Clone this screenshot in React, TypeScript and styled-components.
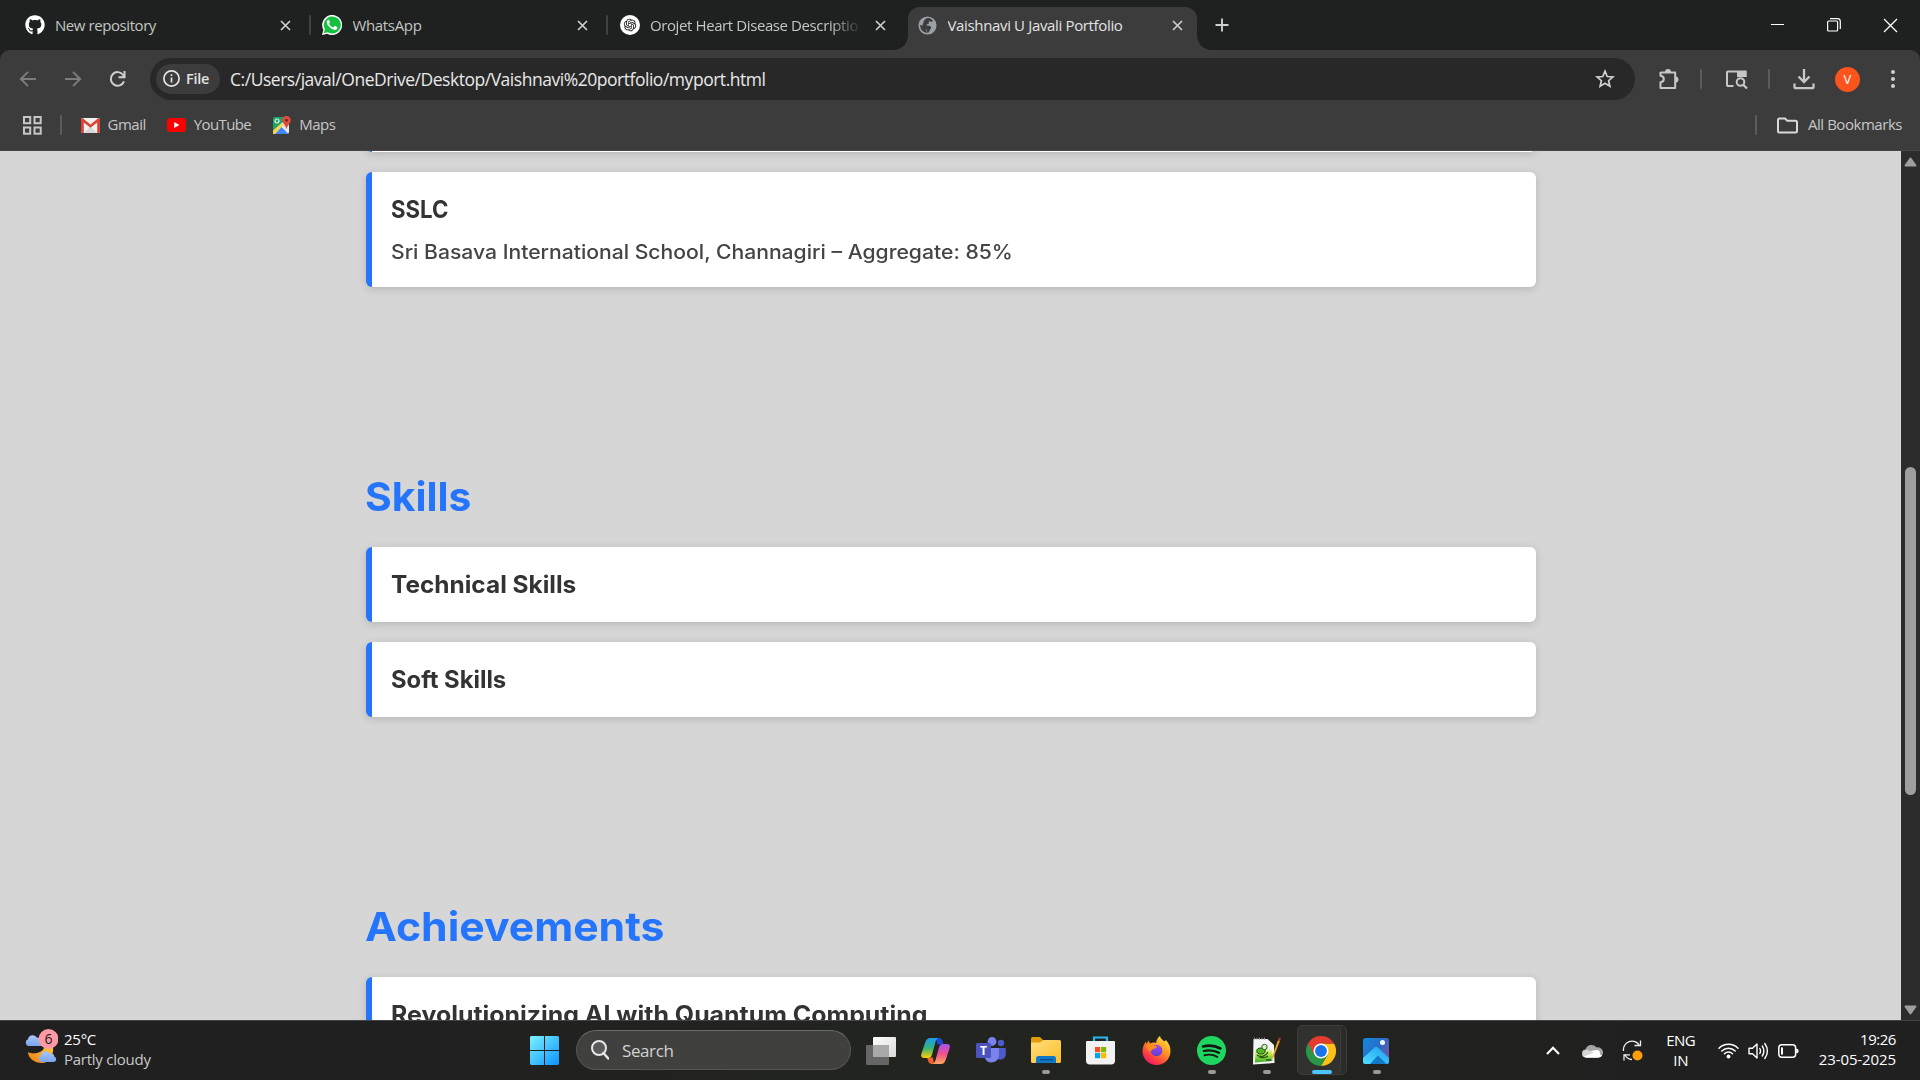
import React from "react";
import styled, { createGlobalStyle, css } from "styled-components";
import { FaGithub } from "react-icons/fa";
import { RiOpenaiFill } from "react-icons/ri";

const GlobalStyle = createGlobalStyle`
  * { box-sizing: border-box; }
  html, body { margin: 0; padding: 0; background: #202020; }
  body { overflow: hidden; }
  svg { display: block; flex: none; }
`;

const Screen = styled.div`
  width: 1920px;
  height: 1080px;
  display: flex;
  flex-direction: column;
  overflow: hidden;
  font-family: "Open Sans", "Noto Sans", sans-serif;
  font-size: 15px;
  white-space: nowrap;
`;

const Label = styled.span<{ $track?: number }>`
  letter-spacing: ${(p) => p.$track ?? -0.4}px;
`;

/* ---------- tab strip ---------- */

const TabStrip = styled.header`
  height: 50px;
  flex: none;
  display: flex;
  background: #1f2120;
  padding-left: 12px;
`;

const Tab = styled.div<{ $active?: boolean; $divider?: boolean }>`
  position: relative;
  width: 297.5px;
  height: 50px;
  display: flex;
  align-items: center;
  padding-left: 12.5px;
  color: #c3c6c4;
  ${(p) =>
    p.$divider &&
    css`
      &::after {
        content: "";
        position: absolute;
        right: -1px;
        top: 15px;
        width: 2px;
        height: 20px;
        border-radius: 1px;
        background: #414342;
      }
    `}
  ${(p) =>
    p.$active &&
    css`
      color: #e3e3e3;
      width: 293px;
      &::before {
        content: "";
        position: absolute;
        left: 3.5px;
        top: 7px;
        width: 289px;
        height: 43px;
        border-radius: 12px 12px 0 0;
        background: #3c3c3c;
      }
    `}
`;

const Flare = styled.i<{ $side: "left" | "right" }>`
  position: absolute;
  bottom: 0;
  width: 14px;
  height: 14px;
  ${(p) => (p.$side === "left" ? "left: -10.5px;" : "left: 292.5px;")}
  background: radial-gradient(
    circle at ${(p) => (p.$side === "left" ? "0 0" : "100% 0")},
    transparent 13.5px,
    #3c3c3c 14px
  );
`;

const TabIcon = styled.span`
  position: relative;
  width: 20px;
  height: 20px;
  display: grid;
  place-items: center;
  margin-right: 10.5px;
`;

const TabTitle = styled.div<{ $fade?: boolean; $track?: number }>`
  position: relative;
  width: 209px;
  overflow: hidden;
  letter-spacing: ${(p) => p.$track ?? -0.4}px;
  ${(p) => p.$fade && "mask-image: linear-gradient(90deg, #000 180px, transparent 212px);"}
`;

const TabClose = styled.span`
  position: relative;
  margin-left: 16.5px;
`;

const NewTab = styled.span`
  display: flex;
  align-items: center;
  margin-left: 17.5px;
`;

const WindowControls = styled.div`
  display: flex;
  align-items: center;
  gap: 43px;
  margin-left: auto;
  padding-right: 23px;
`;

/* ---------- toolbar ---------- */

const Chrome = styled.div`
  height: 101px;
  flex: none;
  background: linear-gradient(#1f2120, #1f2120) 0 0 / 100% 12px no-repeat;
`;

const ChromeBody = styled.div`
  height: 101px;
  background: #3c3c3c;
  border-radius: 10px 10px 0 0;
  border-bottom: 1px solid #4a4647;
`;

const Toolbar = styled.div`
  height: 58px;
  display: flex;
  align-items: center;
  padding: 0 22px 0 18px;
`;

const NavButtons = styled.div`
  display: flex;
  align-items: center;
  width: 132px;
  gap: 25px;
`;

const Omnibox = styled.div`
  width: 1485px;
  height: 42px;
  border-radius: 21px;
  background: #282828;
  display: flex;
  align-items: center;
  padding: 0 20px 0 6px;
`;

const FileChip = styled.div`
  width: 64px;
  height: 30px;
  border-radius: 15px;
  background: #3c3c3c;
  color: #e3e3e3;
  font-weight: 600;
  font-size: 14.5px;
  display: flex;
  align-items: center;
  gap: 6px;
  padding: 0 0 1px 7px;
`;

const Url = styled.div`
  flex: 1;
  padding-left: 10px;
  font-size: 17.5px;
  letter-spacing: -0.47px;
  color: #e8e8e8;
`;

const ToolbarIcon = styled.span<{ $before: number }>`
  flex: none;
  margin-left: ${(p) => p.$before}px;
`;

const Divider = styled.i`
  display: block;
  width: 2px;
  height: 20px;
  border-radius: 1px;
  background: #5c5c5c;
`;

const Avatar = styled.span`
  width: 25px;
  height: 25px;
  border-radius: 50%;
  background: #fa541c;
  color: #fff;
  font-size: 13px;
  display: grid;
  place-items: center;
`;

const BookmarksBar = styled.div`
  height: 34px;
  display: flex;
  align-items: center;
  padding: 0 18px 0 22.5px;
  color: #c7c7c7;
`;

const Bookmark = styled.div<{ $gap: number; $before: number }>`
  display: flex;
  align-items: center;
  gap: ${(p) => p.$gap}px;
  margin-left: ${(p) => p.$before}px;
`;

const AllBookmarks = styled(Bookmark)`
  margin-left: auto;
`;

const BookmarkName = styled(Label)`
  padding-bottom: 2px;
`;

/* ---------- web page ---------- */

const Viewport = styled.div`
  flex: 1;
  min-height: 0;
  display: flex;
  overflow: hidden;
  background: #d6d6d6;
`;

const Page = styled.main`
  width: 1901px;
  height: 869px;
  overflow: hidden;
  display: flex;
  flex-direction: column;
  align-items: center;
  font-family: Inter, "Open Sans", sans-serif;
`;

const Section = styled.section`
  width: 1170px;
  flex: none;
  margin: 0 0 180px 1px;
  display: flex;
  flex-direction: column;
  gap: 20px;
`;

const EducationSection = styled(Section)`
  margin-top: -39px;
`;

const stretched = css<{ $stretch: number }>`
  align-self: flex-start;
  transform: scaleX(${(p) => p.$stretch});
  transform-origin: 0 50%;
`;

const SectionTitle = styled.h2<{ $stretch: number }>`
  margin: 0 0 0 -1px;
  line-height: 60px;
  font-size: 40px;
  font-weight: 700;
  color: #2575fc;
  ${stretched}
`;

const Card = styled.article`
  background: #fff;
  border-left: 6px solid #2575fc;
  border-radius: 6px;
  padding: 20px 20px 20px 19px;
  box-shadow: 0 2px 8px rgba(0, 0, 0, 0.15);
  display: flex;
  flex-direction: column;
  gap: 10px;
`;

const CardEnd = styled(Card)`
  height: 40px;
`;

const CardTitle = styled.h3<{ $stretch: number }>`
  margin: 0;
  line-height: 36px;
  height: 35px;
  font-size: 24px;
  font-weight: 700;
  color: #333;
  ${stretched}
`;

const CardText = styled.p<{ $stretch: number }>`
  margin: 0;
  line-height: 30px;
  font-size: 20px;
  font-weight: 500;
  color: #444;
  ${stretched}
`;

const Scrollbar = styled.div`
  width: 19px;
  height: 869px;
  background: #2c2c2c;
  display: flex;
  flex-direction: column;
  align-items: center;
  padding-top: 6px;
`;

const Thumb = styled.div`
  width: 11px;
  height: 328px;
  margin: 300px 0 210px;
  border-radius: 6px;
  background: #9f9f9f;
`;

/* ---------- taskbar ---------- */

const Taskbar = styled.footer`
  height: 60px;
  flex: none;
  display: flex;
  background: linear-gradient(90deg, #202020 0, #202020 400px, #22241f 850px, #22231f 1350px, #202020 1650px);
  border-top: 1px solid #444;
  color: #fff;
`;

const Weather = styled.div`
  width: 530px;
  display: flex;
  padding: 8px 0 0 24px;
  gap: 6px;
`;

const WeatherText = styled.div`
  display: flex;
  flex-direction: column;
  line-height: 20px;
`;

const Dim = styled(Label)`
  color: #c8c8c8;
`;

const Launcher = styled.div`
  display: flex;
  align-items: center;
`;

const SearchPill = styled.div`
  width: 275px;
  height: 40px;
  margin: 0 2px 1px 17px;
  border-radius: 20px;
  border: 1px solid #555;
  border-top-color: #6a6a6a;
  background: #40403f;
  display: flex;
  align-items: center;
  gap: 13px;
  padding-left: 14px;
  font-size: 17px;
  color: #d2d2d2;
`;

const AppSlot = styled.div<{ $mark?: "idle" | "active" }>`
  position: relative;
  width: 55.1px;
  height: 59px;
  display: grid;
  place-items: center;
  ${(p) =>
    p.$mark &&
    css`
      &::after {
        content: "";
        position: absolute;
        bottom: 6px;
        left: ${p.$mark === "active" ? 18 : 24}px;
        width: ${p.$mark === "active" ? 20 : 8}px;
        height: 4px;
        border-radius: 2px;
        background: ${p.$mark === "active" ? "#4cc2ff" : "#9a9a98"};
      }
    `}
`;

const ActivePlate = styled.i<{ $back?: boolean }>`
  position: absolute;
  top: 4px;
  left: 3px;
  width: ${(p) => (p.$back ? 50 : 44)}px;
  height: 50px;
  border-radius: 6px;
  background: ${(p) => (p.$back ? "#2b2b29" : "#31312f")};
  border: 1px solid #3c3c3a;
`;

const Above = styled.span`
  position: relative;
`;

const Tray = styled.div`
  flex: 1;
  display: flex;
  align-items: center;
  justify-content: flex-end;
  padding-right: 24px;
`;

const TrayItem = styled.div<{ $after: number }>`
  margin-right: ${(p) => p.$after}px;
`;

const Stack = styled.div<{ $align: string; $lift: number }>`
  display: flex;
  flex-direction: column;
  line-height: 20px;
  padding-bottom: ${(p) => p.$lift}px;
  align-items: ${(p) => p.$align};
`;

/* ---------- drawings ---------- */

const Cross = ({ size = 9, color = "#d0d0d0", w = 1.8 }: { size?: number; color?: string; w?: number }) => (
  <svg width={size} height={size} viewBox="0 0 10 10" overflow="visible">
    <path d="M0 0L10 10M10 0L0 10" stroke={color} strokeWidth={w} />
  </svg>
);

const WhatsAppLogo = () => (
  <svg width="20" height="20" viewBox="0 0 24 24">
    <path fill="#fff" d="M0 24l1.7-6.2A12 12 0 1 1 6.3 22.400z" />
    <path fill="#14c040" d="M2 22l1.5-4.900A10.200 10.200 0 1 1 7 20.700z" />
    <path
      fill="#fff"
      d="M8.500 6.200c-.3-.6-.5-.6-.9-.6-.5 0-2 1-1.900 3 .1 2.300 1.700 4.200 3.300 5.900 2.100 2.100 4.300 3.200 6.100 3.400 1.700.1 3.100-1 3.300-2.100.2-.9.1-1.200-.2-1.400l-2.500-1.200c-.4-.2-.6-.1-.9.3l-1 1.200c-.2.300-.5.300-.9.100-1.900-.8-3.300-2-4.400-3.900-.2-.4 0-.6.200-.8l.8-1.100c.1-.3.1-.5 0-.7z"
    />
  </svg>
);

const OpenAiBadge = () => (
  <svg width="20" height="20" viewBox="0 0 20 20">
    <circle cx="10" cy="10" r="10" fill="#fff" />
    <RiOpenaiFill x="2.500" y="2.500" size={15} color="#111" />
  </svg>
);

const Globe = () => (
  <svg width="19" height="19" viewBox="0 0 20 20">
    <circle cx="10" cy="10" r="9.500" fill="#9aa0a6" />
    <path
      fill="#3c3c3c"
      d="M10.500 2.200c2.600.2 4.200 1.500 5.500 3.300-1 .4-2 .9-3.100.3-1-.5-1.900.1-1.500 1.300.3 1-.8 1.500-1.800 1.700-1 .3-.4 1.500.5 1.400 2-.2 3.700.4 3.800 2 .1 1.300-1.100 1.500-1.500 2.700-.4 1.200-.9 2.300-2.300 2.700-.9.2-.5-1.500-.6-2.500-.1-1.400-1.500-1.200-2.300-2.200-.7-1-2-1.300-2.400-2.400-.3-1.300.7-2 .8-3.300.1-1.600 2-4.800 4.900-5z"
    />
    <path fill="#3c3c3c" d="M2.300 9.200c1.700 1 3.700.9 5 1.900 1 .8-.2 1.900 1.200 2.800l.9 3.800C5.200 17.400 2.200 14 2.300 9.200z" />
  </svg>
);

const Arrow = ({ flip }: { flip?: boolean }) => (
  <svg width="20" height="20" viewBox="0 0 20 20">
    <path
      d={flip ? "M2 10h15M10 2.800l7.200 7.200-7.200 7.200" : "M18 10H3M10 2.800L2.800 10l7.200 7.200"}
      fill="none"
      stroke="#7d7d7d"
      strokeWidth="1.900"
    />
  </svg>
);

const Reload = () => (
  <svg width="20" height="20" viewBox="0 0 20 20">
    <path d="M16 12.300A6.800 6.800 0 1 1 15.200 6L16.500 8" fill="none" stroke="#d0d0d0" strokeWidth="2" />
    <path d="M16.500 2v6.200H10.500" fill="none" stroke="#d0d0d0" strokeWidth="2" />
  </svg>
);

const Info = () => (
  <svg width="17" height="17" viewBox="0 0 17 17">
    <circle cx="8.500" cy="8.500" r="7.600" fill="none" stroke="#e3e3e3" strokeWidth="1.700" />
    <path d="M8.500 7.500v5M8.500 4.300v1.800" stroke="#e3e3e3" strokeWidth="1.700" />
  </svg>
);

const Star = () => (
  <svg width="20" height="20" viewBox="0 0 20 20">
    <path
      d="M10 2.200l2.200 5.300 5.700.5-4.300 3.700 1.300 5.600L10 14.300l-4.900 3 1.300-5.600L2.100 8l5.700-.5z"
      fill="none"
      stroke="#d0d0d0"
      strokeWidth="1.700"
    />
  </svg>
);

const Extension = () => (
  <svg width="22" height="22" viewBox="0 0 22 22">
    <path
      d="M2.500 4.500h14.700v4.300M2.500 4v3.800c2 .2 3.300 1.200 3.300 3.200s-1.300 3-3.300 3.200V20h14.700v-6"
      fill="none"
      stroke="#c7c7c7"
      strokeWidth="2"
      strokeLinejoin="round"
    />
    <path d="M7 4a3 3 0 0 1 6 0zM17.500 8.500a3 3 0 0 1 0 6z" fill="#c7c7c7" />
    <path d="M17.200 8v7" stroke="#c7c7c7" strokeWidth="2" />
  </svg>
);

const SideSearch = () => (
  <svg width="23" height="20" viewBox="0 0 23 20">
    <path d="M8.500 17H2.800Q2 17 2 16V3.500Q2 2.500 3 2.500H20.500V8" fill="none" stroke="#c7c7c7" strokeWidth="2" />
    <path d="M12 2h9.500v6H12z" fill="#c7c7c7" />
    <circle cx="15.500" cy="13" r="5" fill="#3c3c3c" />
    <circle cx="15.500" cy="13" r="3.800" fill="none" stroke="#c7c7c7" strokeWidth="2" />
    <path d="M18 15.500l4 4" stroke="#c7c7c7" strokeWidth="2.200" />
  </svg>
);

const Download = () => (
  <svg width="22" height="22" viewBox="0 0 22 22">
    <path d="M11 1v12.500M5.500 8.500l5.500 5.500 5.500-5.500M1.500 15.500v3.200q0 1.500 1.500 1.500h16q1.500 0 1.500-1.500v-3.200" fill="none" stroke="#c7c7c7" strokeWidth="2.300" />
  </svg>
);

const Dots = () => (
  <svg width="6" height="20" viewBox="0 0 6 20">
    {[3, 10, 17].map((y) => (
      <circle key={y} cx="3" cy={y} r="2" fill="#d0d0d0" />
    ))}
  </svg>
);

const Grid = () => (
  <svg width="19" height="19" viewBox="0 0 19 19">
    {[1, 11.500].map((x) =>
      [1, 11.500].map((y) => (
        <rect key={`${x}-${y}`} x={x} y={y} width="6.200" height="6.200" fill="none" stroke="#c7c7c7" strokeWidth="2" />
      ))
    )}
  </svg>
);

const GmailLogo = () => (
  <svg width="19" height="15" viewBox="0 0 19 15">
    <rect width="19" height="15" rx="1.500" fill="#f1f1f1" />
    <path d="M3 15l6.500-6.500L16 15z" fill="#d8d8d8" />
    <path d="M0 1.500V13.500Q0 15 1.500 15H2.800V4.500L9.500 9.800l6.700-5.300V15h1.300q1.500 0 1.500-1.500v-12Q19 0 17.500 0L9.500 6.500 1.500 0Q0 0 0 1.500z" fill="#d94436" />
  </svg>
);

const YouTubeLogo = () => (
  <svg width="19" height="14" viewBox="0 0 19 14">
    <rect width="19" height="14" rx="3.500" fill="#f00" />
    <path d="M7.200 4l5.200 3-5.200 3z" fill="#fff" />
  </svg>
);

const MapsLogo = () => (
  <svg width="18" height="18" viewBox="0 0 18 18">
    <path d="M0 3Q0 1 1.500 1H16v15.500Q16 18 14.500 18H1.500Q0 18 0 16.500z" fill="#1fa463" />
    <path d="M0 15.500L10 6l6 3v7.500L14 18H1.500z" fill="#e8e8e8" />
    <path d="M2 18l6.500-7 7 7z" fill="#4285f4" />
    <path d="M0 14.500L8.500 7l2 2L1.500 18H0z" fill="#fbd44b" />
    <circle cx="4" cy="5" r="2" fill="none" stroke="#e8f5ee" strokeWidth="1.200" />
    <path d="M13.500 0a4.200 4.200 0 0 1 4.300 4.300c0 3-3.300 4.700-4.300 9-1-4.300-4.300-6-4.300-9A4.200 4.200 0 0 1 13.500 0z" fill="#dd4b3e" />
    <circle cx="13.500" cy="4.200" r="1.500" fill="#7a261d" />
  </svg>
);

const Folder = () => (
  <svg width="21" height="17" viewBox="0 0 21 17">
    <path d="M1 3Q1 1.500 2.500 1.500H8l2.300 2.300h8.200q1.500 0 1.500 1.500v8.700q0 1.500-1.500 1.500h-16Q1 15.500 1 14z" fill="none" stroke="#d8d8d8" strokeWidth="2" />
  </svg>
);

const ScrollArrow = ({ down }: { down?: boolean }) => (
  <svg width="13" height="10" viewBox="0 0 13 10">
    <path
      d={down ? "M1.500 1.500h10l-5 7z" : "M1.500 8.500h10l-5-7z"}
      fill="#9f9f9f"
      stroke="#9f9f9f"
      strokeWidth="2"
      strokeLinejoin="round"
    />
  </svg>
);

const CLOUD = "M3.500 11A3.500 3.500 0 0 1 3.300 4.500 4.700 4.700 0 0 1 12 3a3.300 3.300 0 0 1 4 2.600A2.800 2.800 0 0 1 15.500 11z";

const WeatherIcon = () => (
  <svg width="34" height="36" viewBox="0 0 34 36">
    <defs>
      <linearGradient id="cloud" x1="0" y1="0" x2="0" y2="1">
        <stop offset="0" stopColor="#a9c8f8" />
        <stop offset="1" stopColor="#7ba4ee" />
      </linearGradient>
      <linearGradient id="moon" x1="0" y1="1" x2="1" y2="0">
        <stop offset="0" stopColor="#f07a14" />
        <stop offset="1" stopColor="#ffc83d" />
      </linearGradient>
    </defs>
    <path d="M4 23c5 3 14 1 16-4l9-1c1 9-4 16-11 16C10 34 4 29 4 23z" fill="url(#moon)" />
    <g transform="translate(0.500 5.500) scale(1.050)">
      <path d={CLOUD} fill="url(#cloud)" />
    </g>
    <g transform="translate(13.500 21.500) scale(1.050)">
      <path d={CLOUD} fill="url(#cloud)" />
    </g>
    <circle cx="24.500" cy="9.500" r="10" fill="#ff99a4" transform="translate(0 .500)" />
    <text x="24.500" y="15" textAnchor="middle" fontSize="14" fontFamily="Open Sans" fill="#1b1b1b">
      6
    </text>
  </svg>
);

const WindowsLogo = () => (
  <svg width="29" height="29" viewBox="0 0 29 29">
    <defs>
      <linearGradient id="win" x1="0" y1="0" x2="29" y2="29" gradientUnits="userSpaceOnUse">
        <stop offset="0" stopColor="#7df3ff" />
        <stop offset="1" stopColor="#0a93ff" />
      </linearGradient>
    </defs>
    <path d="M1 0h13v14H0V1zM15 0h13l1 1v13H15zM0 15h14v14H1l-1-1zM15 15h14v13l-1 1H15z" fill="url(#win)" />
  </svg>
);

const SearchGlass = () => (
  <svg width="18" height="20" viewBox="0 0 18 20">
    <circle cx="8" cy="8" r="7" fill="#5a5a5a" stroke="#e6e6e6" strokeWidth="2" />
    <path d="M12.500 13l4.700 5.500" stroke="#e6e6e6" strokeWidth="2.400" strokeLinecap="round" />
  </svg>
);

const TaskView = () => (
  <svg width="30" height="28" viewBox="0 0 30 28">
    <defs>
      <linearGradient id="tv" x1="0" y1="0" x2="1" y2="1">
        <stop offset="0" stopColor="#fff" />
        <stop offset="1" stopColor="#d9d9d9" />
      </linearGradient>
    </defs>
    <rect x="0" y="8" width="23" height="20" rx="1" fill="#666" />
    <rect x="7" y="0" width="23" height="20" rx="1" fill="url(#tv)" />
    <rect x="7" y="8" width="16" height="12" fill="#a9a9a9" />
  </svg>
);

const Copilot = () => (
  <svg width="29" height="26" viewBox="0 0 29 26">
    <defs>
      <linearGradient id="cpA" x1="0" y1="0" x2="0" y2="1">
        <stop offset="0" stopColor="#1a9bf0" />
        <stop offset=".5" stopColor="#35b37a" />
        <stop offset="1" stopColor="#ffd000" />
      </linearGradient>
      <linearGradient id="cpB" x1="0" y1="0" x2="0" y2="1">
        <stop offset="0" stopColor="#a94ff0" />
        <stop offset=".5" stopColor="#f0508c" />
        <stop offset="1" stopColor="#ffa85c" />
      </linearGradient>
    </defs>
    <path d="M15 0h2.500q3 0 4 3l1 3.500h-6z" fill="#1e48d8" />
    <path d="M13 26h-2q-3 0-3.800-3L6 19.500h6z" fill="#f4602a" />
    <path d="M9 0h9q-2.500.5-3.300 3.300L11 16.500q-1 3.500-4 3.500H3Q-.5 20 .3 16L4.500 3.500Q6 0 9 0z" fill="url(#cpA)" />
    <path d="M20 26h-9q2.500-.5 3.300-3.300L18 9.500Q19 6 22 6h4q3.500 0 2.700 4l-4.200 12.500Q23 26 20 26z" fill="url(#cpB)" />
  </svg>
);

const Teams = () => (
  <svg width="30" height="27" viewBox="0 0 30 27">
    <circle cx="25" cy="6" r="3.200" fill="#5059c9" />
    <path d="M20 11h9q.8 0 .8.800V17a5.500 5.500 0 0 1-9.800 3.500z" fill="#5059c9" />
    <circle cx="16" cy="4.500" r="4.400" fill="#7b83eb" />
    <path d="M9 11h13.300q.7 0 .7.800V19a7.500 7.500 0 0 1-14 2.500z" fill="#7b83eb" />
    <rect y="6" width="15" height="15" rx="1.500" fill="#4b53bc" />
    <text x="7.500" y="17.800" textAnchor="middle" fontSize="12" fontWeight="700" fontFamily="Open Sans" fill="#fff">
      T
    </text>
  </svg>
);

const Explorer = () => (
  <svg width="30" height="27" viewBox="0 0 30 27">
    <defs>
      <linearGradient id="fold" x1="0" y1="0" x2="1" y2="1">
        <stop offset="0" stopColor="#ffdf7e" />
        <stop offset="1" stopColor="#fcbc28" />
      </linearGradient>
    </defs>
    <path d="M0 1.500Q0 0 1.500 0H9l3.500 3.500V9H0z" fill="#e09a0b" />
    <path d="M0 5.500h9l3.500-2.500H28.500Q30 3 30 4.500v20q0 1.500-1.500 1.500h-27Q0 26 0 24.500z" fill="url(#fold)" />
    <path d="M5 26v-4.500Q5 19 7.500 19h15q2.500 0 2.500 2.500V26z" fill="#0f78c8" />
    <rect x="9" y="22" width="13" height="1.300" fill="#0b4f87" />
  </svg>
);

const Store = () => (
  <svg width="29" height="29" viewBox="0 0 29 29">
    <path d="M8 6V1.500h13V6" fill="none" stroke="#29b6f2" strokeWidth="2.200" />
    <path d="M1 5h27q1 0 1 1v18.500q0 4-4 4H4q-4 0-4-4V6q0-1 1-1z" fill="#f2f2f2" />
    <rect x="9" y="11" width="5.200" height="5.200" fill="#f25022" />
    <rect x="15" y="11" width="5.200" height="5.200" fill="#7fba00" />
    <rect x="9" y="17" width="5.200" height="5.200" fill="#00a4ef" />
    <rect x="15" y="17" width="5.200" height="5.200" fill="#ffb900" />
  </svg>
);

const Firefox = () => (
  <svg width="29" height="29" viewBox="0 0 29 29">
    <defs>
      <linearGradient id="ff" x1=".9" y1="0" x2=".2" y2="1">
        <stop offset="0" stopColor="#fff04a" />
        <stop offset=".4" stopColor="#ff9a24" />
        <stop offset=".75" stopColor="#ff4040" />
        <stop offset="1" stopColor="#e5126e" />
      </linearGradient>
      <linearGradient id="ffc" x1="0" y1="0" x2="0" y2="1">
        <stop offset="0" stopColor="#a54ae6" />
        <stop offset="1" stopColor="#5b3fd6" />
      </linearGradient>
    </defs>
    <path
      d="M18 0c.5 3 3 4 4.500 5.500L24 4c3 3.500 4.500 7 4.500 11A14 14 0 0 1 .5 15C.5 11 2 8 4 5.500L4.500 8 6.500 4.500 8 7.500c2-1 4-1.200 6-.5C14.500 4 16 1 18 0z"
      fill="url(#ff)"
    />
    <circle cx="14.500" cy="14.500" r="5.800" fill="url(#ffc)" />
    <path d="M4 9c3-2 6-1.500 8 .5l3 1c-.5 1.500-2 2-3.500 2.500-1 .5-2.500 1-2.500 2.500-3-.5-5-3-5-6.500z" fill="#ff8a1f" />
    <path d="M15 8c3-1 6 1 6.500 4l1.500-3c-1-2-4-4-8-1z" fill="#ffb02e" />
  </svg>
);

const Spotify = () => (
  <svg width="29" height="29" viewBox="0 0 29 29">
    <circle cx="14.500" cy="14.500" r="14.500" fill="#1ed760" />
    <g fill="none" stroke="#191414" strokeLinecap="round">
      <path d="M6 10.500c5.500-1.500 12-1 17.500 2" strokeWidth="2.600" />
      <path d="M6.800 15c5-1.300 10.500-.7 15.200 1.800" strokeWidth="2.200" />
      <path d="M7.500 19.200c4.300-1 9-.5 12.800 1.600" strokeWidth="1.900" />
    </g>
  </svg>
);

const NotepadPP = () => (
  <svg width="29" height="28" viewBox="0 0 29 28">
    <defs>
      <linearGradient id="npp" x1="0" y1="0" x2="0" y2="1">
        <stop offset=".3" stopColor="#f4f4f4" />
        <stop offset=".55" stopColor="#c8ee50" />
        <stop offset="1" stopColor="#3cae2a" />
      </linearGradient>
    </defs>
    <path d="M1.500 2h14l6.500 6 .5 18-21.500 1.500z" fill="#f4f4f4" />
    <path d="M3.500 5h11.500l5 4.500.5 14.500-17.500 1.500z" fill="url(#npp)" />
    <path d="M2 1.800h12" stroke="#999" strokeWidth="2" strokeDasharray="1 1.500" />
    <ellipse cx="9" cy="14" rx="4.200" ry="3" fill="#52b82a" stroke="#1d4a12" />
    <circle cx="12.500" cy="10" r="2.700" fill="#d8f0c0" stroke="#2d5a22" />
    <path d="M5 18c4 3 9 1 11-3M7 20c3 1 7 .5 9-1M14 23h5" fill="none" stroke="#24571a" strokeWidth="1.300" />
    <path d="M20 20l6-17 2 .8-6.500 16.500-1.800 1.500z" fill="#f0a020" />
    <path d="M25.800 3.500L26.800.5l2 .8-.8 3z" fill="#a84030" />
  </svg>
);

const ChromeLogo = () => (
  <svg width="30" height="30" viewBox="0 0 48 48">
    <path d="M24 12h20.800A24 24 0 0 1 24 48l10.400-18z" fill="#fbc116" />
    <path d="M3.200 12A24 24 0 0 0 24 48L34.400 30 24 24z" fill="#2a9447" />
    <path d="M24 12h20.800A24 24 0 0 0 3.200 12l10.400 18z" fill="#e33b2e" />
    <circle cx="24" cy="24" r="12" fill="#fff" />
    <circle cx="24" cy="24" r="9.500" fill="#1a73e8" />
  </svg>
);

const Photos = () => (
  <svg width="26" height="26" viewBox="0 0 26 26">
    <defs>
      <linearGradient id="ph" x1="0" y1="0" x2="1" y2=".6">
        <stop offset="0" stopColor="#1489e0" />
        <stop offset=".6" stopColor="#2a6cc4" />
        <stop offset="1" stopColor="#6a56b0" />
      </linearGradient>
      <linearGradient id="ph2" x1="0" y1="1" x2="1" y2="0">
        <stop offset="0" stopColor="#50e0ff" />
        <stop offset="1" stopColor="#1a9cee" />
      </linearGradient>
    </defs>
    <rect width="26" height="26" rx="2.500" fill="url(#ph)" />
    <path d="M0 20L11.500 9.500q1.700-1.300 3.300 0L26 20v3.500q0 2.500-2.500 2.500h-21Q0 26 0 23.500z" fill="url(#ph2)" />
    <path d="M7 26l8-8.500 8.500 8.500z" fill="#1479c8" />
    <circle cx="19.500" cy="4.500" r="2.500" fill="#f4f7ff" />
  </svg>
);

const Chevron = () => (
  <svg width="14" height="9" viewBox="0 0 14 9">
    <path d="M1 8l6-6.200L13 8" fill="none" stroke="#fff" strokeWidth="2.100" />
  </svg>
);

const OneDrive = () => (
  <svg width="21" height="14" viewBox="0 0 21 14">
    <path d="M4 13.500A4 4 0 0 1 3.500 5.500 6.500 6.500 0 0 1 14.800 3.500 5 5 0 0 1 17 13.500z" fill="#a5a5a5" />
    <path d="M1 11.500L8 7.500q4-2 8-1.500a4.300 4.300 0 0 1 0 7.500H4q-2 0-3-2z" fill="#fff" />
    <path d="M.5 9.500Q1 6 4.500 5.500L13 9l-10 4.300Q.5 12.500.5 9.500z" fill="#d5d5d5" />
    <path d="M2 12.500L13 8l7 3.500q-1 2-3.500 2H4z" fill="#fff" />
  </svg>
);

const Sync = () => (
  <svg width="21" height="21" viewBox="0 0 21 21">
    <path d="M1.500 11A8.600 8.600 0 0 1 17.500 5.500M12.500 5.500h6V.5M10 19.500A8.600 8.600 0 0 1 3 15M8 14.800H2V20.500" fill="none" stroke="#eee" strokeWidth="1.300" />
    <circle cx="15.500" cy="15.500" r="5" fill="#ff9c0a" />
  </svg>
);

const Wifi = () => (
  <svg width="21" height="17" viewBox="0 0 21 17">
    <g fill="none" stroke="#fff" strokeWidth="1.500" strokeLinecap="round">
      <path d="M1 6.300a13.300 13.300 0 0 1 19 0M3.800 9a9.500 9.500 0 0 1 13.400 0M6.500 11.700a5.700 5.700 0 0 1 8 0" />
    </g>
    <circle cx="10.500" cy="14.500" r="1.900" fill="#fff" />
  </svg>
);

const Volume = () => (
  <svg width="21" height="18" viewBox="0 0 21 18">
    <g fill="none" stroke="#fff" strokeWidth="1.400" strokeLinejoin="round" strokeLinecap="round">
      <path d="M1 6.200h3.500L9 2v14l-4.500-4.200H1z" />
      <path d="M11.800 6.500q1.500 2.500 0 5M14.300 4q3.200 5 0 10M16.800 1.500q5.200 7.500 0 15" />
    </g>
  </svg>
);

const Battery = () => (
  <svg width="21" height="14" viewBox="0 0 21 14">
    <rect x=".8" y=".8" width="16.800" height="12.400" rx="3" fill="none" stroke="#fff" strokeWidth="1.500" />
    <rect x="3" y="3.200" width="2" height="7.600" rx=".8" fill="#fff" />
    <path d="M18.200 4.500q2.500.3 2.500 2.500t-2.500 2.500z" fill="#fff" />
  </svg>
);

/* ---------- composition ---------- */

const tabs = [
  { title: "New repository", icon: <FaGithub size={20} color="#fff" />, track: -0.43, divider: true },
  { title: "WhatsApp", icon: <WhatsAppLogo />, track: -0.34, divider: true },
  { title: "Orojet Heart Disease Descriptio", icon: <OpenAiBadge />, track: -0.4, fade: true },
  { title: "Vaishnavi U Javali Portfolio", icon: <Globe />, track: -0.35, active: true },
];

const apps: { id: string; icon: React.ReactNode; mark?: "idle" | "active" }[] = [
  { id: "task-view", icon: <TaskView /> },
  { id: "copilot", icon: <Copilot /> },
  { id: "teams", icon: <Teams /> },
  { id: "explorer", icon: <Explorer />, mark: "idle" },
  { id: "store", icon: <Store /> },
  { id: "firefox", icon: <Firefox /> },
  { id: "spotify", icon: <Spotify />, mark: "idle" },
  { id: "notepad", icon: <NotepadPP />, mark: "idle" },
  { id: "chrome", icon: <ChromeLogo />, mark: "active" },
  { id: "photos", icon: <Photos />, mark: "idle" },
];

const tools = [
  { id: "extensions", before: 23, icon: <Extension /> },
  { id: "divider-1", before: 20, icon: <Divider /> },
  { id: "side-search", before: 23, icon: <SideSearch /> },
  { id: "divider-2", before: 20, icon: <Divider /> },
  { id: "downloads", before: 23, icon: <Download /> },
  { id: "profile", before: 20, icon: <Avatar>V</Avatar> },
  { id: "menu", before: 29.5, icon: <Dots /> },
];

export default function App() {
  return (
    <Screen>
      <GlobalStyle />
      <TabStrip>
        {tabs.map((t) => (
          <Tab key={t.title} $active={t.active} $divider={t.divider}>
            {t.active && (
              <>
                <Flare $side="left" />
                <Flare $side="right" />
              </>
            )}
            <TabIcon>{t.icon}</TabIcon>
            <TabTitle $fade={t.fade} $track={t.track}>
              {t.title}
            </TabTitle>
            <TabClose>
              <Cross />
            </TabClose>
          </Tab>
        ))}
        <NewTab>
          <svg width="14" height="14" viewBox="0 0 14 14">
            <path d="M7 .5v13M.5 7h13" stroke="#d0d0d0" strokeWidth="1.900" />
          </svg>
        </NewTab>
        <WindowControls>
          <svg width="13" height="13" viewBox="0 0 13 13">
            <path d="M0 5.500h13" stroke="#fff" />
          </svg>
          <svg width="14" height="14" viewBox="0 0 14 14">
            <rect x=".6" y="3" width="10" height="10" rx="1" fill="none" stroke="#fff" strokeWidth="1.200" />
            <path d="M3 .7h7.500q2.800 0 2.800 2.800V11" fill="none" stroke="#fff" strokeWidth="1.200" />
          </svg>
          <Cross size={13} color="#fff" w={1} />
        </WindowControls>
      </TabStrip>

      <Chrome>
        <ChromeBody>
          <Toolbar>
            <NavButtons>
              <Arrow />
              <Arrow flip />
              <Reload />
            </NavButtons>
            <Omnibox>
              <FileChip>
                <Info />
                <Label $track={-0.3}>File</Label>
              </FileChip>
              <Url>C:/Users/javal/OneDrive/Desktop/Vaishnavi%20portfolio/myport.html</Url>
              <Star />
            </Omnibox>
            {tools.map((t) => (
              <ToolbarIcon key={t.id} $before={t.before}>
                {t.icon}
              </ToolbarIcon>
            ))}
          </Toolbar>
          <BookmarksBar>
            <Grid />
            <Bookmark $gap={19} $before={18.5}>
              <Divider />
              <GmailLogo />
            </Bookmark>
            <Bookmark $gap={0} $before={7.5}>
              <BookmarkName $track={-0.5}>Gmail</BookmarkName>
            </Bookmark>
            <Bookmark $gap={8} $before={21}>
              <YouTubeLogo />
              <BookmarkName $track={-0.6}>YouTube</BookmarkName>
            </Bookmark>
            <Bookmark $gap={8} $before={22}>
              <MapsLogo />
              <BookmarkName $track={-0.5}>Maps</BookmarkName>
            </Bookmark>
            <AllBookmarks $gap={10} $before={0}>
              <Divider />
              <Bookmark $gap={10} $before={10}>
                <Folder />
                <BookmarkName $track={-0.46}>All Bookmarks</BookmarkName>
              </Bookmark>
            </AllBookmarks>
          </BookmarksBar>
        </ChromeBody>
      </Chrome>

      <Viewport>
        <Page>
          <EducationSection>
            <CardEnd />
            <Card>
              <CardTitle $stretch={0.925}>SSLC</CardTitle>
              <CardText $stretch={1.057}>Sri Basava International School, Channagiri – Aggregate: 85%</CardText>
            </Card>
          </EducationSection>
          <Section>
            <SectionTitle $stretch={1.02}>Skills</SectionTitle>
            <Card>
              <CardTitle $stretch={1.018}>Technical Skills</CardTitle>
            </Card>
            <Card>
              <CardTitle $stretch={0.992}>Soft Skills</CardTitle>
            </Card>
          </Section>
          <Section>
            <SectionTitle $stretch={1.068}>Achievements</SectionTitle>
            <Card>
              <CardTitle $stretch={1.037}>Revolutionizing AI with Quantum Computing</CardTitle>
            </Card>
          </Section>
        </Page>
        <Scrollbar>
          <ScrollArrow />
          <Thumb />
          <ScrollArrow down />
        </Scrollbar>
      </Viewport>

      <Taskbar>
        <Weather>
          <WeatherIcon />
          <WeatherText>
            <Label $track={-0.26}>25°C</Label>
            <Dim $track={-0.25}>Partly cloudy</Dim>
          </WeatherText>
        </Weather>
        <Launcher>
          <WindowsLogo />
          <SearchPill>
            <SearchGlass />
            <Label $track={-0.4}>Search</Label>
          </SearchPill>
          {apps.map((a) => (
            <AppSlot key={a.id} $mark={a.mark}>
              {a.mark === "active" && (
                <>
                  <ActivePlate $back />
                  <ActivePlate />
                </>
              )}
              <Above>{a.icon}</Above>
            </AppSlot>
          ))}
        </Launcher>
        <Tray>
          <TrayItem $after={22}>
            <Chevron />
          </TrayItem>
          <TrayItem $after={19}>
            <OneDrive />
          </TrayItem>
          <TrayItem $after={23}>
            <Sync />
          </TrayItem>
          <TrayItem $after={22.5}>
            <Stack $align="center" $lift={2}>
              <Label $track={-0.5}>ENG</Label>
              <Label>IN</Label>
            </Stack>
          </TrayItem>
          <TrayItem $after={9}>
            <Wifi />
          </TrayItem>
          <TrayItem $after={9}>
            <Volume />
          </TrayItem>
          <TrayItem $after={20}>
            <Battery />
          </TrayItem>
          <Stack $align="flex-end" $lift={4}>
            <Label $track={-0.45}>19:26</Label>
            <Label $track={-0.1}>23-05-2025</Label>
          </Stack>
        </Tray>
      </Taskbar>
    </Screen>
  );
}
